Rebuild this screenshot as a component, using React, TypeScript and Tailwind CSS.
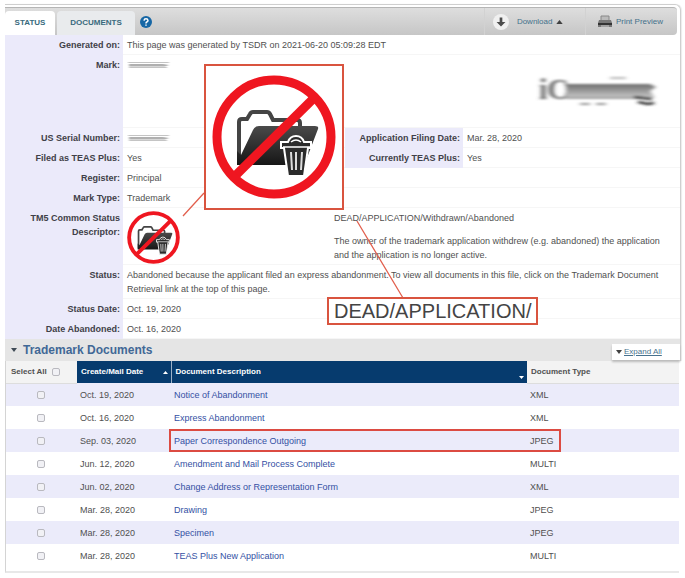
import React from "react";

type RowProps = { label: string; children?: React.ReactNode; className?: string };

function Field({ label, children, className = "" }: RowProps) {
  return (
    <div className={"flex " + className}>
      <dt className="w-[118px] shrink-0 bg-[#ebeafa] py-[3px] pr-[3px] pl-1 text-right font-bold text-[#3f4048]">{label}</dt>
      <dd className="min-w-0 flex-1 border-b border-[#f6f6f6] pt-[3px] pr-3 pb-[2px] pl-1">{children}</dd>
    </div>
  );
}

function FieldPair({ left, right }: { left: RowProps; right: RowProps }) {
  return (
    <div className="flex">
      <Field label={left.label} className="w-[340px] shrink-0">{left.children}</Field>
      <Field label={right.label} className="flex-1">{right.children}</Field>
    </div>
  );
}

function DeadMark({ id, className }: { id: string; className: string }) {
  return (
    <svg viewBox="8 8 124 124" className={className} role="img" aria-label="Dead application">
      <defs>
        <linearGradient id={id} x1="0" y1="0" x2="0" y2="1">
          <stop offset="0" stopColor="#4a4a4a" />
          <stop offset="1" stopColor="#161616" />
        </linearGradient>
      </defs>
      <circle cx="70" cy="70" r="57" fill="#fff" />
      <path d="M35 96V55q0-3 3-3h5l3-5q1-2 3-2h14q2 0 3 2l3 6h24q3 0 3 3v6" fill="none" stroke="#444" strokeWidth="4" />
      <path d="M33 98V84l4 4 12-25q2-4 6-4h56q4 0 3 3l-13 34q-1 2-3 2z" fill={`url(#${id})`} />
      <path d="M28 112 L111 30" stroke="#ef1620" strokeWidth="9" />
      <circle cx="70" cy="70" r="57" fill="none" stroke="#ef1620" strokeWidth="9" />
      <path d="M77 75h7q2-6 8-6t8 6h7v6h-3l-4 28H84l-4-28h-3z" fill="#2b2b2b" stroke="#fff" strokeWidth="2" />
      <path d="M79 80h27M87 75q5-4 10 0" fill="none" stroke="#fff" strokeWidth="1.6" />
      <path d="M87 85l1 18M92 85v18M98 85l-1 18" stroke="#ddd" strokeWidth="2" />
    </svg>
  );
}

function Smudge() {
  return (
    <svg viewBox="0 0 46 8" className="mt-[3px] h-2 w-[46px]" role="img" aria-label="Redacted">
      <defs>
        <filter id="smudge-soft"><feGaussianBlur stdDeviation="1.2 0.6" /></filter>
      </defs>
      <g filter="url(#smudge-soft)">
        <path d="M1 1.5h41M2 6.5h38" stroke="#c4c4c4" />
        <path d="M2 3h34l6 1-4 1.5H2z" fill="#b0b0b0" />
      </g>
    </svg>
  );
}

function MarkImage() {
  return (
    <svg viewBox="0 0 126 40" className="absolute top-4 right-5 h-10 w-[126px]" role="img" aria-label="Mark image">
      <defs>
        <filter id="mark-soft" x="-10%" y="-20%" width="120%" height="140%"><feGaussianBlur stdDeviation="2 0.8" /></filter>
        <linearGradient id="mark-fade" x1="0" y1="0" x2="0" y2="1">
          <stop offset="0" stopColor="#6e6e6e" />
          <stop offset="1" stopColor="#cacaca" />
        </linearGradient>
      </defs>
      <g filter="url(#mark-soft)">
        <text x="5" y="28" fontSize="30" fill="#666" fontFamily="Liberation Serif, serif" fontWeight="bold">iC</text>
        <path d="M32 13h84l6 3-6 4 5 7H32z" fill="url(#mark-fade)" />
        <path d="M32 27h74" stroke="#8a8a8a" strokeWidth="1.5" />
        <path d="M76 7h16" stroke="#bbb" strokeWidth="2" />
        <path d="M46 33h10M62 33h10" stroke="#999" strokeWidth="2" />
        <path d="M100 26l18 2M104 31l10 2 6-1" fill="none" stroke="#333" strokeWidth="2.500" />
      </g>
    </svg>
  );
}

const documents = [
  ["Oct. 19, 2020", "Notice of Abandonment", "XML"],
  ["Oct. 16, 2020", "Express Abandonment", "XML"],
  ["Sep. 03, 2020", "Paper Correspondence Outgoing", "JPEG"],
  ["Jun. 12, 2020", "Amendment and Mail Process Complete", "MULTI"],
  ["Jun. 02, 2020", "Change Address or Representation Form", "XML"],
  ["Mar. 28, 2020", "Drawing", "JPEG"],
  ["Mar. 28, 2020", "Specimen", "JPEG"],
  ["Mar. 28, 2020", "TEAS Plus New Application", "MULTI"],
];

const checkbox = "block size-2 appearance-none rounded-[2px] border border-[#b9b9bf] bg-[#f1f1f5] checked:bg-[#0b3c71]";

export default function App() {
  return (
    <main className="relative bg-white pt-1 pr-1 pl-[5px] font-['Liberation_Sans',Arial,sans-serif] text-[9px] leading-[14px] text-[#505050]">
      <section className="rounded-tr-md border-t border-r border-[#cfcfcf] shadow-[1px_0_1px_#ececec]">
        <header className="mt-[2px] mr-[3px] flex h-7 items-stretch rounded-r border-t border-[#b5b5b5] bg-linear-to-b from-[#dedede] to-[#c6c6c6] text-[8px]">
          <nav className="flex items-stretch gap-[2px] pt-[3px] font-bold text-[#386a7d]">
            <button className="w-[50px] rounded-t-sm bg-white">STATUS</button>
            <button className="w-[78px] rounded-t-sm bg-[#e9ebed]">DOCUMENTS</button>
          </nav>
          <button aria-label="Help" className="ml-[5px] flex items-center">
            <svg viewBox="0 0 12 12" className="size-3">
              <circle cx="6" cy="6" r="6" fill="#1767a5" />
              <path d="M4 4.600Q4.200 2.800 6 2.800T8 4.500Q8 5.500 6.800 6 6 6.400 6 7.400M6 8.400v1.400" fill="none" stroke="#fff" strokeWidth="1.500" />
            </svg>
          </button>
          <div className="ml-auto flex text-[#44718b]">
            <button className="flex w-[101px] items-center gap-2 border-l border-[#d2d2d2] pl-2">
              <svg viewBox="0 0 18 18" className="size-4">
                <circle cx="9" cy="9" r="9" fill="#f0f0f0" />
                <path d="M7.500 4h3v5H14L9 14 4 9h3.500z" fill="#4c4c4c" />
              </svg>
              <span className="flex items-center gap-1">Download
                <svg viewBox="0 0 8 5" className="h-1 w-[7px]"><path d="M0 5 4 0l4 5z" fill="#404040" /></svg>
              </span>
            </button>
            <button className="flex items-center gap-1 border-l border-[#d2d2d2] pr-[14px] pl-3">
              <svg viewBox="0 0 14 13" className="h-[13px] w-[14px]">
                <path d="M3 6V1h8v5" fill="#bbb" stroke="#888" />
                <path d="M1 5h12l1 3v4H0V8z" fill="#777" />
                <path d="M0 8h14v2H0z" fill="#333" />
                <path d="M3 11h8" stroke="#ccc" />
              </svg>
              Print Preview
            </button>
          </div>
        </header>

        <dl>
          <Field label="Generated on:">This page was generated by TSDR on 2021-06-20 05:09:28 EDT</Field>
          <div className="relative">
            <Field label="Mark:" className="h-[73px]"><Smudge /></Field>
            <MarkImage />
          </div>
          <FieldPair
            left={{ label: "US Serial Number:", children: <Smudge /> }}
            right={{ label: "Application Filing Date:", children: "Mar. 28, 2020" }}
          />
          <FieldPair
            left={{ label: "Filed as TEAS Plus:", children: "Yes" }}
            right={{ label: "Currently TEAS Plus:", children: "Yes" }}
          />
          <Field label="Register:">Principal</Field>
          <Field label="Mark Type:">Trademark</Field>
          <Field label="TM5 Common Status Descriptor:" className="h-[57px]">
            <div className="flex">
              <DeadMark id="folder-small" className="size-[53px] shrink-0" />
              <div className="ml-[154px] flex flex-col gap-[9px]">
                <p>DEAD/APPLICATION/Withdrawn/Abandoned</p>
                <p>The owner of the trademark application withdrew (e.g. abandoned) the application and the application is no longer active.</p>
              </div>
            </div>
          </Field>
          <Field label="Status:">Abandoned because the applicant filed an express abandonment. To view all documents in this file, click on the Trademark Document Retrieval link at the top of this page.</Field>
          <Field label="Status Date:">Oct. 19, 2020</Field>
          <Field label="Date Abandoned:">Oct. 16, 2020</Field>
        </dl>

        <div className="flex h-[22px] items-center bg-[#e5e5e5] pl-[6px]">
          <h2 className="flex items-center gap-[6px] text-[12px] font-bold text-[#416896]">
            <svg viewBox="0 0 6 4" className="h-1 w-[6px]"><path d="M0 0h6L3 4z" fill="#3f4a55" /></svg>
            Trademark Documents
          </h2>
          <button className="mt-1 ml-auto flex h-4 w-[68px] items-center gap-[2px] bg-white pl-1 text-[8px] text-[#47718d] shadow-[0_2px_2px_#bbb]">
            <svg viewBox="0 0 6 4" className="h-1 w-[6px]"><path d="M0 0h6L3 4z" fill="#404040" /></svg>
            <span className="underline">Expand All</span>
          </button>
        </div>
      </section>

      <div className="mr-[2px] border-b-2 border-l border-b-[#e8e8e8] border-l-[#d4d4d4] pb-1">
        <table className="w-full table-fixed border-collapse text-left">
          <colgroup>
            <col className="w-[71px]" />
            <col className="w-[94px]" />
            <col />
            <col className="w-[152px]" />
          </colgroup>
          <thead className="text-[8px]">
            <tr className="h-[22px]">
              <th className="border-b border-[#ddd] bg-[#f3f3f3] p-0 pl-[5px]">
                <label className="flex items-center gap-[5px]">Select All <input type="checkbox" className={checkbox} /></label>
              </th>
              <th className="border-r border-[#9db2c8] bg-[#063b6e] p-0 pr-[3px] pl-1 text-white">
                <span className="flex items-center justify-between">Create/Mail Date
                  <svg viewBox="0 0 5 3" className="h-[3px] w-[5px]"><path d="M0 3 2.500 0 5 3z" fill="#fff" /></svg>
                </span>
              </th>
              <th className="bg-[#063b6e] p-0 pr-[3px] pl-1 text-white">
                <span className="flex items-end justify-between">Document Description
                  <svg viewBox="0 0 5 3" className="h-[3px] w-[5px]"><path d="M0 0h5L2.500 3z" fill="#fff" /></svg>
                </span>
              </th>
              <th className="border-b border-[#ddd] bg-[#f3f3f3] p-0 pl-1">Document Type</th>
            </tr>
          </thead>
          <tbody>
            {documents.map(([date, title, type], i) => (
              <tr key={i} className="h-[23px] odd:bg-[#ebebfa]">
                <td className="p-0 pl-[31px]"><input type="checkbox" aria-label={"Select " + title} className={checkbox} /></td>
                <td className="p-0 pl-[3px]">{date}</td>
                <td className="relative p-0 pl-[3px]">
                  <a href="#" className="text-[#3450a4]">{title}</a>
                  {i === 2 && <span className="pointer-events-none absolute inset-y-0 -right-[34px] -left-[2px] border-2 border-[#dc4b42]" />}
                </td>
                <td className="p-0 pl-[3px]">{type}</td>
              </tr>
            ))}
          </tbody>
        </table>
      </div>

      <svg className="pointer-events-none absolute top-0 left-0 h-[340px] w-[560px]" viewBox="0 0 560 340" aria-hidden="true">
        <path d="M204 193 183 216M357 221 403 298" stroke="#e2604e" strokeWidth="1.300" fill="none" />
      </svg>
      <figure className="absolute top-[64px] left-[204px] border-2 border-[#d9543f] bg-white px-[6px] py-[9px]">
        <DeadMark id="folder-large" className="size-[124px]" />
      </figure>
      <p className="absolute top-[297px] left-[327px] h-7 w-[211px] border-2 border-[#d9543f] bg-white pl-[5px] text-[20px] leading-6 text-[#444]">DEAD/APPLICATION/</p>
    </main>
  );
}
